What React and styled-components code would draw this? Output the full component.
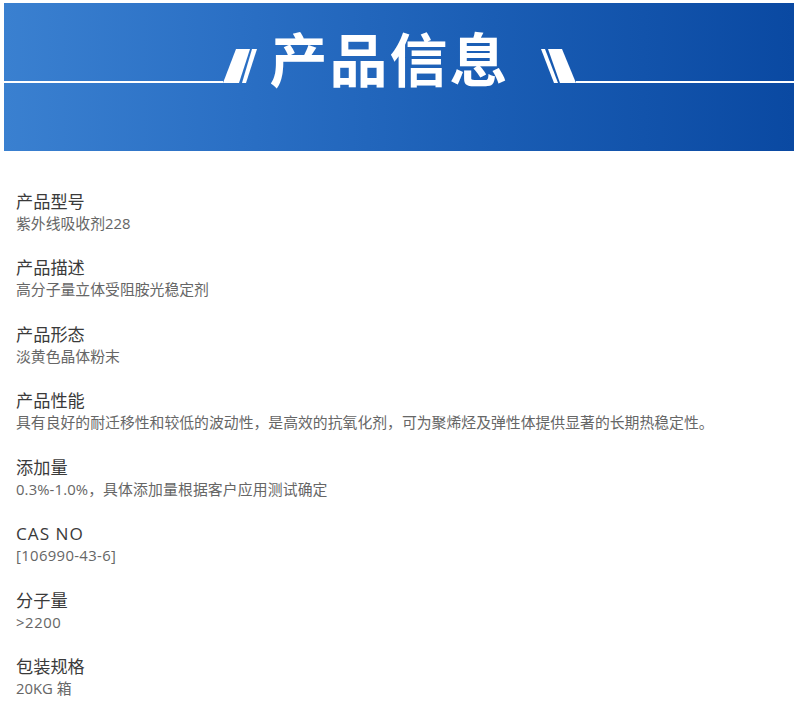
import React from "react";
import styled, { createGlobalStyle } from "styled-components";

const GlobalStyle = createGlobalStyle`
  html, body {
    margin: 0;
    padding: 0;
    background: #fff;
    overflow: hidden;
  }
`;

const Page = styled.div`
  width: 796px;
  height: 707px;
  padding: 3px 2px 0 4px;
  box-sizing: border-box;
  font-family: "Open Sans", "Noto Sans CJK SC", sans-serif;
`;

const Banner = styled.div`
  height: 148px;
  background: linear-gradient(90deg, #3a80d0 0%, #2a6fc4 30%, #1a5db4 62%, #0a49a2 100%);
  display: flex;
  align-items: flex-start;
`;

const Rule = styled.div`
  flex: 1;
  height: 2px;
  margin-top: 78px;
  background: #fff;
`;

const Slashes = styled.svg`
  width: 35px;
  height: 35px;
  margin-top: 45px;
  flex: none;
  fill: #fff;
`;

const Heading = styled.h1`
  margin: 15px 0 0;
  width: 283px;
  padding-right: 19px;
  box-sizing: border-box;
  flex: none;
  text-align: center;
  color: #fff;
  font-family: "Noto Sans CJK SC", sans-serif;
  font-size: 58px;
  font-weight: 700;
  line-height: 78px;
  letter-spacing: 2px;
  white-space: nowrap;
`;

const List = styled.dl`
  margin: 0;
  padding: 39px 12px 0;
`;

const Item = styled.div`
  height: 66.45px;
`;

const Label = styled.dt`
  font-size: 17.2px;
  line-height: 23px;
  letter-spacing: ${(props) => props.$spacing || 0}px;
  color: #3a3a3a;
`;

const Value = styled.dd`
  margin: 0;
  font-size: 14.85px;
  line-height: 20px;
  letter-spacing: ${(props) => props.$spacing || 0}px;
  color: #666;
`;

const items = [
  { label: "产品型号", value: "紫外线吸收剂228" },
  { label: "产品描述", value: "高分子量立体受阻胺光稳定剂" },
  { label: "产品形态", value: "淡黄色晶体粉末" },
  { label: "产品性能", value: "具有良好的耐迁移性和较低的波动性，是高效的抗氧化剂，可为聚烯烃及弹性体提供显著的长期热稳定性。" },
  { label: "添加量", value: "0.3%-1.0%，具体添加量根据客户应用测试确定", valueSpacing: 0.12 },
  { label: "CAS NO", value: "[106990-43-6]", labelSpacing: 1, valueSpacing: 0.35 },
  { label: "分子量", value: ">2200", valueSpacing: 0.6 },
  { label: "包装规格", value: "20KG 箱" },
];

export default function App() {
  return (
    <Page>
      <GlobalStyle />
      <Banner>
        <Rule />
        <Slashes viewBox="0 0 35 35">
          <polygon points="0,35 16,35 27,1 13,1" />
          <polygon points="19,35 23,35 34,1 29,1" />
        </Slashes>
        <Heading>产品信息</Heading>
        <Slashes viewBox="0 0 35 35">
          <polygon points="35,35 19,35 7,1 21,1" />
          <polygon points="17,35 13,35 0,1 4,1" />
        </Slashes>
        <Rule />
      </Banner>
      <List>
        {items.map((item) => (
          <Item key={item.label}>
            <Label $spacing={item.labelSpacing}>{item.label}</Label>
            <Value $spacing={item.valueSpacing}>{item.value}</Value>
          </Item>
        ))}
      </List>
    </Page>
  );
}
